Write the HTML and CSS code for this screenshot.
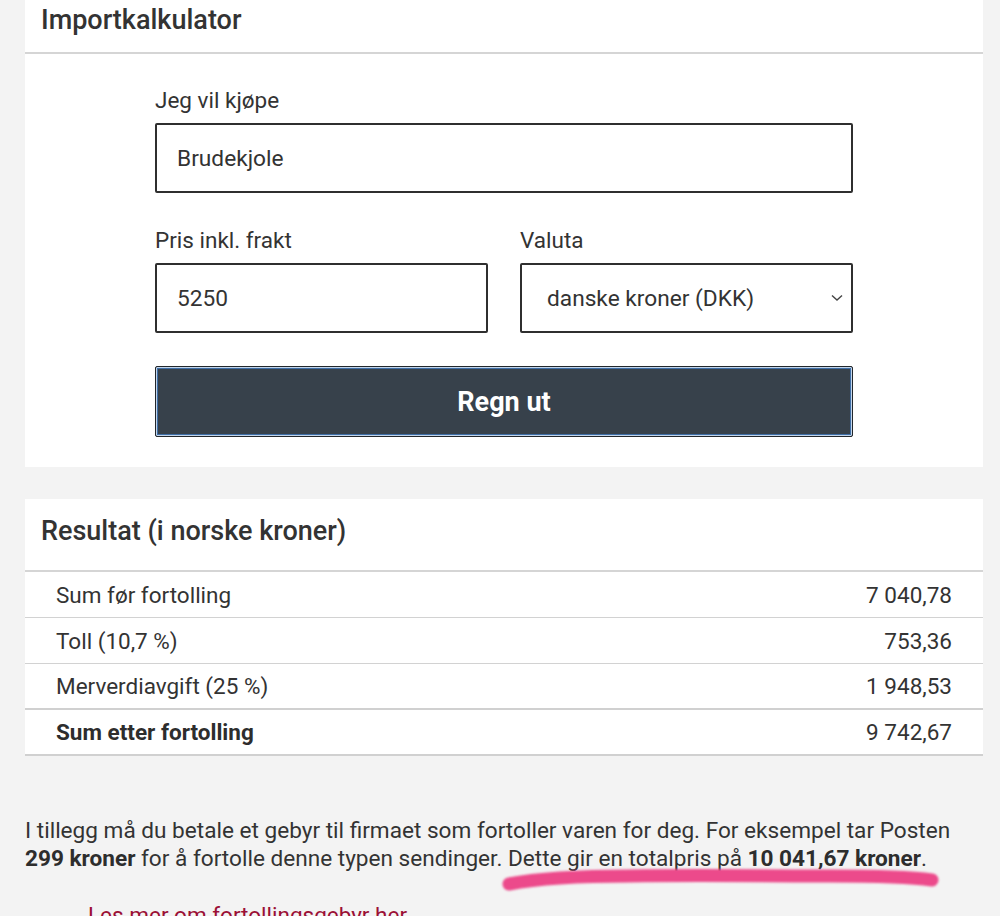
FILE: index.html
```html
<!DOCTYPE html>
<html lang="no">
<head>
<meta charset="utf-8">
<title>Importkalkulator</title>
<link rel="stylesheet" href="styles.css">
</head>
<body>
<main class="page">
  <section class="card">
    <h2 class="card-title">Importkalkulator</h2>
    <form class="calc-form">
      <div class="field">
        <label class="label" for="item">Jeg vil kjøpe</label>
        <input class="input" id="item" type="text" value="Brudekjole">
      </div>
      <div class="row-fields">
        <div class="field">
          <label class="label" for="price">Pris inkl. frakt</label>
          <input class="input" id="price" type="text" value="5250">
        </div>
        <div class="field">
          <label class="label" for="cur">Valuta</label>
          <div class="select-wrap">
            <select class="input select" id="cur">
              <option>danske kroner (DKK)</option>
            </select>
            <svg class="chevron" width="12" height="8" viewBox="0 0 12 8"><path d="M1 1.5 L6 6 L11 1.5" fill="none" stroke="#444" stroke-width="1.4"/></svg>
          </div>
        </div>
      </div>
      <button class="btn" type="button">Regn ut</button>
    </form>
  </section>

  <section class="card result">
    <h2 class="card-title result-title">Resultat (i norske kroner)</h2>
    <table class="table">
      <tr><td>Sum før fortolling</td><td class="num">7 040,78</td></tr>
      <tr><td>Toll (10,7 %)</td><td class="num">753,36</td></tr>
      <tr><td>Merverdiavgift (25 %)</td><td class="num">1 948,53</td></tr>
      <tr class="total"><td><strong>Sum etter fortolling</strong></td><td class="num">9 742,67</td></tr>
    </table>
  </section>

  <div class="note">
    <p class="note-text">I tillegg må du betale et gebyr til firmaet som fortoller varen for deg. For eksempel tar Posten <strong>299 kroner</strong> for å fortolle denne typen sendinger. Dette gir en totalpris på <strong>10 041,67 kroner</strong>.</p>
    <svg class="brush" width="450" height="36" viewBox="0 0 450 36"><path d="M9 25 C 40 19, 80 17, 130 17 C 200 16, 260 17, 330 17 C 380 17, 410 18, 432 21" fill="none" stroke="#ec4a8b" stroke-width="13" stroke-linecap="round"/></svg>
    <ul class="links">
      <li><a href="#">Les mer om fortollingsgebyr her</a></li>
    </ul>
  </div>
</main>
</body>
</html>
```

FILE: styles.css
```css
* { box-sizing: border-box; }
html, body { margin: 0; padding: 0; }
body {
  background: #f3f3f3;
  font-family: Roboto, "Liberation Sans", sans-serif;
  color: #333;
  height: 916px;
  overflow: hidden;
}
.page {
  width: 958px;
  margin-left: 25px;
}
.card {
  background: #fff;
}
.card-title {
  margin: 0;
  font-size: 27px;
  font-weight: 500;
  line-height: 32px;
  padding: 4px 16px 16px;
  border-bottom: 2px solid #d5d5d5;
  color: #333;
}
.calc-form {
  width: 698px;
  margin: 0 auto;
  padding: 34px 0 30px;
  display: flex;
  flex-direction: column;
}
.field {
  display: flex;
  flex-direction: column;
}
.label {
  font-size: 22.5px;
  line-height: 24px;
  margin-bottom: 11px;
  color: #333;
}
.input {
  height: 70px;
  border: 2px solid #2f2f2f;
  border-radius: 2px;
  padding: 0 20px;
  font-family: Roboto, "Liberation Sans", sans-serif;
  font-size: 22.7px;
  color: #333;
  background: #fff;
  width: 100%;
}
.row-fields {
  display: grid;
  grid-template-columns: 1fr 1fr;
  column-gap: 32px;
  margin-top: 35px;
}
.select-wrap { position: relative; }
.select {
  appearance: none;
  -webkit-appearance: none;
  padding-left: 25px;
}
.chevron {
  position: absolute;
  right: 10px;
  top: 31px;
}
.btn {
  margin-top: 33px;
  height: 71px;
  background: #37414b;
  color: #fff;
  font-family: Roboto, "Liberation Sans", sans-serif;
  font-size: 27px;
  font-weight: 700;
  border: 1px solid #22272c;
  border-radius: 2px;
  box-shadow: inset 0 0 0 1px #c3d5ea, inset 0 0 0 2px #3f6ea6;
}
.result { margin-top: 32px; }
.result-title {
  padding: 16px 16px 23px;
}
.table {
  width: 100%;
  border-collapse: collapse;
  font-size: 22.5px;
}
.table td {
  height: 45.8px;
  padding: 0 31px;
  border-bottom: 1px solid #d2d2d2;
  color: #333;
}
.table .num { text-align: right; }
.table tr:nth-child(3) td { border-bottom: 2px solid #d0d0d0; }
.table tr.total td { border-bottom: 2px solid #d0d0d0; }
.table strong { font-weight: 700; color: #2d2d2d; }
.note {
  position: relative;
  margin-top: 61px;
}
.note-text {
  margin: 0;
  font-size: 22.6px;
  line-height: 28px;
  color: #333;
}
.note-text strong { color: #2d2d2d; }
.brush {
  position: absolute;
  left: 475px;
  top: 42px;
  filter: blur(0.8px);
}
.links {
  margin: 28px 0 0;
  padding-left: 63px;
  list-style: none;
  font-size: 22.5px;
  line-height: 28px;
}
.links a { color: #9b1036; text-decoration: none; }
```
